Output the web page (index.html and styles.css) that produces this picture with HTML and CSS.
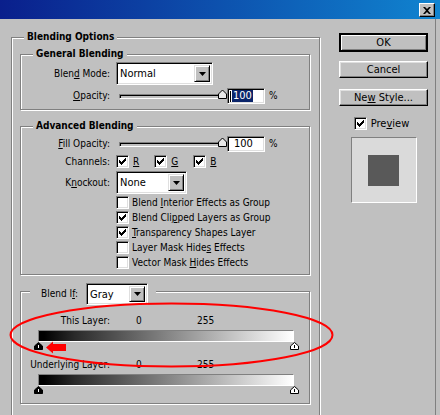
FILE: index.html
```html
<!DOCTYPE html>
<html lang="en">
<head>
    <meta charset="UTF-8">
    <title>Layer Style</title>
    <link rel="stylesheet" href="styles.css">
</head>
<body>
    <div class="titlebar">
        <div class="close-btn">
            <svg width="8" height="7" viewBox="0 0 8 7"><path d="M0 0h2l2 2 2-2h2L5 3.5 8 7H6L4 5 2 7H0l3-3.5z"/></svg>
        </div>
    </div>

    <div class="dialog">
        <div class="main-col">
            <div class="group outer">
                <span class="legend">Blending Options</span>

                <div class="group general">
                    <span class="legend">General Blending</span>
                    <div class="row tall">
                        <span class="lbl">Blen<u>d</u> Mode:</span>
                        <div class="select mode">
                            <span class="value">Normal</span>
                            <span class="drop"><svg width="7" height="4" viewBox="0 0 7 4"><path d="M0 0h7L3.5 4z"/></svg></span>
                        </div>
                    </div>
                    <div class="row field">
                        <span class="lbl"><u>O</u>pacity:</span>
                        <div class="slider"><span class="thumb"><svg width="9" height="10" viewBox="0 0 9 10"><path d="M.5 9.5V5L4.5 1l4 4v4.5z" fill="#e8e8e8" stroke="#000"/></svg></span></div>
                        <div class="edit"><span class="caret"></span><span class="sel">100</span></div>
                        <span class="pct">%</span>
                    </div>
                </div>

                <div class="group advanced">
                    <span class="legend">Advanced Blending</span>
                    <div class="row field">
                        <span class="lbl"><u>F</u>ill Opacity:</span>
                        <div class="slider"><span class="thumb"><svg width="9" height="10" viewBox="0 0 9 10"><path d="M.5 9.5V5L4.5 1l4 4v4.5z" fill="#e8e8e8" stroke="#000"/></svg></span></div>
                        <div class="edit"><span class="txt">100</span></div>
                        <span class="pct">%</span>
                    </div>
                    <div class="row short">
                        <span class="lbl">Channels:</span>
                        <div class="channels">
                            <span class="check on"></span><u>R</u>
                            <span class="check on"></span><u>G</u>
                            <span class="check on"></span><u>B</u>
                        </div>
                    </div>
                    <div class="row tall">
                        <span class="lbl">K<u>n</u>ockout:</span>
                        <div class="select knock">
                            <span class="value">None</span>
                            <span class="drop"><svg width="7" height="4" viewBox="0 0 7 4"><path d="M0 0h7L3.5 4z"/></svg></span>
                        </div>
                    </div>
                    <div class="checklist">
                        <div class="check-row"><span class="check"></span><span>Blend <u>I</u>nterior Effects as Group</span></div>
                        <div class="check-row"><span class="check on"></span><span>Blend Cli<u>p</u>ped Layers as Group</span></div>
                        <div class="check-row"><span class="check on"></span><span><u>T</u>ransparency Shapes Layer</span></div>
                        <div class="check-row"><span class="check"></span><span>Layer Mask Hide<u>s</u> Effects</span></div>
                        <div class="check-row"><span class="check"></span><span>Vector Mask <u>H</u>ides Effects</span></div>
                    </div>
                </div>

                <div class="group blendif">
                    <div class="legend if-legend">
                        <span class="if-lbl">Blend I<u>f</u>:</span>
                        <div class="select gray">
                            <span class="value">Gray</span>
                            <span class="drop"><svg width="7" height="4" viewBox="0 0 7 4"><path d="M0 0h7L3.5 4z"/></svg></span>
                        </div>
                    </div>

                    <div class="ramp-head">
                        <span class="lbl">This Layer:</span>
                        <span class="lo">0</span>
                        <span class="hi">255</span>
                    </div>
                    <div class="ramp"></div>
                    <div class="handles">
                        <svg width="9" height="8" viewBox="0 0 9 8"><path d="M4.5.5l4 3.5v3.5h-8V4z" fill="#000" stroke="#000"/><path d="M4.5 3v3" stroke="#fff"/></svg>
                        <svg width="9" height="8" viewBox="0 0 9 8"><path d="M4.5.5l4 3.5v3.5h-8V4z" fill="#fff" stroke="#000"/><path d="M4.5 3v3" stroke="#000"/></svg>
                    </div>

                    <div class="ramp-head second">
                        <span class="lbl">Underlying Layer:</span>
                        <span class="lo">0</span>
                        <span class="hi">255</span>
                    </div>
                    <div class="ramp"></div>
                    <div class="handles">
                        <svg width="9" height="8" viewBox="0 0 9 8"><path d="M4.5.5l4 3.5v3.5h-8V4z" fill="#000" stroke="#000"/><path d="M4.5 3v3" stroke="#fff"/></svg>
                        <svg width="9" height="8" viewBox="0 0 9 8"><path d="M4.5.5l4 3.5v3.5h-8V4z" fill="#fff" stroke="#000"/><path d="M4.5 3v3" stroke="#000"/></svg>
                    </div>
                </div>
            </div>
        </div>

        <div class="side-col">
            <div class="btn default">OK</div>
            <div class="btn">Cancel</div>
            <div class="btn">Ne<u>w</u> Style...</div>
            <div class="preview-check"><span class="check on"></span><span>Pre<u>v</u>iew</span></div>
            <div class="swatch"><div class="swatch-inner"></div></div>
        </div>
    </div>

    <svg class="annotation" width="440" height="415" viewBox="0 0 440 415">
        <ellipse cx="171.5" cy="335" rx="161" ry="31.5" fill="none" stroke="#f00" stroke-width="2"/>
        <path d="M46 347.5L53 341.5v2.5h13v7H53v2.5z" fill="#f00"/>
    </svg>
</body>
</html>
```

FILE: styles.css
```css
* {
    box-sizing: border-box;
}

body {
    margin: 0;
    width: 440px;
    height: 415px;
    overflow: hidden;
    position: relative;
    background: #c0c0c0;
    color: #000;
    font-family: "DejaVu Sans Condensed", "DejaVu Sans", sans-serif;
    font-stretch: condensed;
    font-size: 10px;
    line-height: 12px;
}

u {
    text-decoration: underline;
    text-underline-offset: 1px;
}

.titlebar {
    height: 19px;
    background: linear-gradient(to right, #0a1f8c, #1084d0);
    display: flex;
    justify-content: flex-end;
    align-items: flex-start;
    padding: 3px 5px 0 0;
}

.close-btn {
    width: 16px;
    height: 14px;
    background: #c0c0c0;
    border: 1px solid;
    border-color: #fff #000 #000 #fff;
    box-shadow: inset -1px -1px #808080;
    display: flex;
    align-items: center;
    justify-content: center;
}

.dialog {
    display: flex;
    width: 436px;
    height: 396px;
    border-right: 1px solid #808080;
}

.main-col {
    width: 310px;
    margin: 18px 0 0 11px;
}

/* etched group boxes */
.group {
    position: relative;
    border: 1px solid #808080;
    box-shadow: inset 1px 1px #fff, 1px 1px #fff;
}

.legend {
    position: absolute;
    top: -7px;
    left: 12px;
    padding: 0 3px;
    background: #c0c0c0;
    font-weight: bold;
    line-height: 12px;
}

.outer {
    width: 309px;
    padding: 16px 9px 12px 8px;
}

.general {
    padding: 7px 0 5px;
}

.advanced {
    margin-top: 16px;
    padding: 9px 0 4px;
}

.blendif {
    margin-top: 16px;
    padding: 23px 0 9px;
}

.row {
    display: flex;
    align-items: center;
}

.row + .row {
    margin-top: 3px;
}

.row.tall { height: 23px; }
.row.field { height: 16px; }
.row.short { height: 13px; }

.lbl {
    width: 89px;
    margin-right: 6px;
    text-align: right;
    flex-shrink: 0;
}

/* combo boxes */
.select {
    display: flex;
    height: 23px;
    background: #fff;
    border: 1px solid;
    border-color: #808080 #fff #fff #808080;
    box-shadow: inset 1px 1px #000, inset -1px -1px #dfdfdf;
    padding: 2px;
}

.select .value {
    flex: 1;
    padding-left: 1px;
    line-height: 17px;
    font-size: 11px;
}

.drop {
    width: 16px;
    background: #c0c0c0;
    border: 1px solid;
    border-color: #dfdfdf #000 #000 #dfdfdf;
    box-shadow: inset 1px 1px #fff, inset -1px -1px #808080;
    display: flex;
    align-items: center;
    justify-content: center;
}

.mode { width: 97px; }
.knock { width: 71px; }

.gray {
    width: 62px;
    height: 22px;
}

/* sliders + edit fields */
.slider {
    position: relative;
    width: 102px;
    height: 5px;
    margin-left: 3px;
    border: 1px solid;
    border-color: #808080 #fff #fff #808080;
    box-shadow: inset 1px 1px #000;
}

.thumb {
    position: absolute;
    right: -7px;
    top: -6px;
    display: flex;
}

.edit {
    display: flex;
    align-items: center;
    width: 38px;
    height: 16px;
    margin-left: 6px;
    background: #fff;
    border: 1px solid;
    border-color: #808080 #fff #fff #808080;
    box-shadow: inset 1px 1px #000, inset -1px -1px #dfdfdf;
    padding-left: 2px;
}

.caret {
    width: 1px;
    height: 11px;
    background: #000;
    margin-right: 1px;
}

.sel {
    background: #0a246a;
    color: #fff;
    padding: 0 1px;
    font-size: 11px;
}

.txt {
    padding-left: 4px;
    font-size: 11px;
}

.pct {
    margin-left: 4px;
}

/* checkboxes */
.check {
    display: inline-block;
    width: 13px;
    height: 13px;
    flex-shrink: 0;
    background: #fff;
    border: 1px solid;
    border-color: #808080 #fff #fff #808080;
    box-shadow: inset 1px 1px #000, inset -1px -1px #dfdfdf;
}

.check.on {
    background: #fff url("data:image/svg+xml,%3Csvg xmlns='http://www.w3.org/2000/svg' width='7' height='7'%3E%3Cpath d='M0 2h1v1h1v1h1V3h1V2h1V1h1V0h1v3H6v1H5v1H4v1H3v1H2V6H1V5H0z'/%3E%3C/svg%3E") no-repeat 2px 2px;
}

.channels {
    display: flex;
    align-items: center;
}

.channels .check {
    margin-right: 4px;
}

.channels u {
    margin-right: 15px;
}

.checklist {
    margin: 1px 0 0 95px;
}

.check-row {
    display: flex;
    align-items: center;
    height: 15px;
}

.check-row .check {
    margin-right: 3px;
}

/* blend if */
.if-legend {
    top: -9px;
    left: 9px;
    padding: 0 8px 0 11px;
    display: flex;
    align-items: center;
    font-weight: normal;
}

.if-lbl {
    width: 45px;
}

.ramp-head {
    display: flex;
    height: 12px;
}

.ramp-head.second {
    margin-top: 9px;
}

.ramp-head .lo {
    width: 61px;
    margin-left: 20px;
}

.ramp {
    width: 256px;
    height: 12px;
    margin: 3px 0 0 17px;
    border: 1px solid;
    border-color: #808080 #fff #fff #808080;
    background: linear-gradient(to right, #000 2%, #2a2a2a 14%, #fff 100%);
}

.handles {
    display: flex;
    justify-content: space-between;
    width: 265px;
    height: 8px;
    margin-left: 13px;
}

.handles svg {
    display: block;
}

/* right column */
.side-col {
    width: 89px;
    margin: 14px 0 0 18px;
    display: flex;
    flex-direction: column;
    align-items: center;
}

.btn {
    width: 89px;
    height: 17px;
    margin-bottom: 11px;
    background: #c0c0c0;
    border: 1px solid;
    border-color: #fff #000 #000 #fff;
    box-shadow: inset -1px -1px #808080, inset 1px 1px #dfdfdf;
    text-align: center;
    font-size: 11px;
    line-height: 15px;
}

.btn.default {
    height: 19px;
    margin-bottom: 9px;
    border: 2px solid #000;
    border-color: #000;
    box-shadow: inset 1px 1px #fff, inset -1px -1px #808080;
    line-height: 15px;
}

.preview-check {
    display: flex;
    align-items: center;
    margin: 0 0 0 -4px;
    font-size: 11px;
}

.preview-check .check {
    margin-right: 4px;
}

.swatch {
    width: 66px;
    height: 66px;
    margin-top: 7px;
    background: #dadada;
    border: 1px solid;
    border-color: #808080 #fff #fff #808080;
    display: flex;
    align-items: center;
    justify-content: center;
}

.swatch-inner {
    width: 31px;
    height: 31px;
    background: #595959;
}

.annotation {
    position: absolute;
    left: 0;
    top: 0;
    pointer-events: none;
}
```
